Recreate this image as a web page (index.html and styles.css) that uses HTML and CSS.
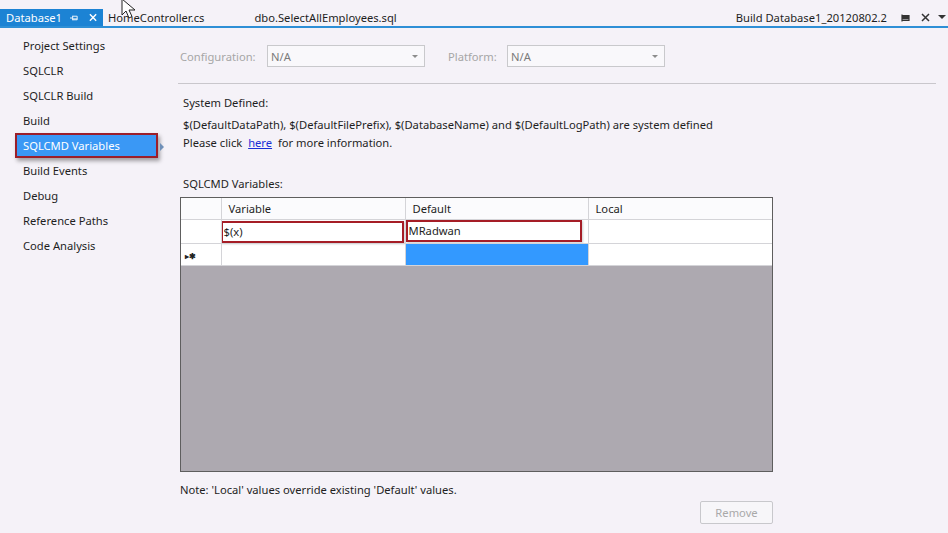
FILE: index.html
```html
<!DOCTYPE html>
<html>
<head>
<meta charset="utf-8">
<link rel="stylesheet" href="styles.css">
</head>
<body>
<div class="tabbar">
  <div class="tabs">
    <div class="tab active">
      <span class="tab-title">Database1</span>
      <svg class="pin" width="10" height="8" viewBox="0 0 10 8"><path d="M0 4h3M3 1.5v5M3 2h5v4H3M3 5h5" stroke="#fff" stroke-width="1" fill="none"/></svg>
      <svg class="x" width="9" height="9" viewBox="0 0 9 9"><path d="M1 1l7 7M8 1L1 8" stroke="#fff" stroke-width="1.6"/></svg>
    </div>
    <div class="tab">HomeController.cs</div>
    <div class="tab wide">dbo.SelectAllEmployees.sql</div>
  </div>
  <div class="tab-right">
    <span class="build">Build Database1_20120802.2</span>
    <svg class="rpin" width="10" height="8" viewBox="0 0 10 8"><path d="M1 0.5v7M1 1.5h7v5H1M1 5h7" stroke="#333" stroke-width="1.2" fill="none"/><rect x="1" y="1.5" width="7" height="3.5" fill="#333"/></svg>
    <svg class="rx" width="9" height="9" viewBox="0 0 9 9"><path d="M1 1l7 7M8 1L1 8" stroke="#333" stroke-width="1.5"/></svg>
    <svg class="rdrop" width="8" height="5" viewBox="0 0 8 5"><path d="M0 0h8L4 4z" fill="#333"/></svg>
  </div>
</div>
<svg class="cursor" width="16" height="22" viewBox="0 0 16 22"><path d="M1 1v16l4-4 3 7 3-1.5-3-6.5h6z" fill="#fff" stroke="#222" stroke-width="1"/></svg>

<div class="main">
  <nav class="nav">
    <div class="nav-item">Project Settings</div>
    <div class="nav-item">SQLCLR</div>
    <div class="nav-item">SQLCLR Build</div>
    <div class="nav-item">Build</div>
    <div class="nav-item selected">SQLCMD Variables<span class="nav-arrow"></span></div>
    <div class="nav-item">Build Events</div>
    <div class="nav-item">Debug</div>
    <div class="nav-item">Reference Paths</div>
    <div class="nav-item">Code Analysis</div>
  </nav>

  <section class="content">
    <div class="config-row">
      <span class="cfg-label">Configuration:</span>
      <div class="combo"><span>N/A</span><span class="combo-arrow"></span></div>
      <span class="cfg-label plat">Platform:</span>
      <div class="combo"><span>N/A</span><span class="combo-arrow"></span></div>
    </div>
    <div class="separator"></div>

    <div class="info">
      <p class="line first">System Defined:</p>
      <p class="line">$(DefaultDataPath), $(DefaultFilePrefix), $(DatabaseName) and $(DefaultLogPath) are system defined</p>
      <p class="line">Please click &nbsp;<a href="#">here</a>&nbsp; for more information.</p>
    </div>

    <p class="grid-label">SQLCMD Variables:</p>

    <div class="grid">
      <table>
        <colgroup>
          <col class="c-rh"><col class="c-var"><col class="c-def"><col class="c-loc">
        </colgroup>
        <tr class="hdr">
          <th></th><th>Variable</th><th>Default</th><th>Local</th>
        </tr>
        <tr class="row">
          <td class="rh"></td>
          <td class="boxed"><div class="redbox var-box">$(x)</div></td>
          <td class="boxed"><div class="redbox def-box">MRadwan</div></td>
          <td></td>
        </tr>
        <tr class="row">
          <td class="rh"><span class="newrow">&#9656;&#10033;</span></td>
          <td></td>
          <td class="sel"></td>
          <td></td>
        </tr>
      </table>
      <div class="grid-empty"></div>
    </div>

    <p class="note">Note: 'Local' values override existing 'Default' values.</p>
    <div class="btn-row">
      <button class="remove">Remove</button>
    </div>
  </section>
</div>
</body>
</html>
```

FILE: styles.css
```css
* { box-sizing: border-box; }
html, body {
  margin: 0;
  padding: 0;
  background: #f5f2f8;
  font-family: "Noto Sans", "Open Sans", sans-serif;
  font-size: 11.2px;
  color: #1e1e1e;
  width: 948px;
  height: 533px;
  overflow: hidden;
}
.tabbar {
  height: 28px;
  display: flex;
  justify-content: space-between;
  align-items: flex-end;
  border-bottom: 2px solid #2e8fd6;
}
.tabs { display: flex; align-items: flex-end; }
.tab {
  height: 17px;
  line-height: 17px;
  padding: 0 6px 0 5px;
  font-size: 11.2px;
  color: #1e1e1e;
}
.tab.wide { padding-left: 44px; }
.tab.active {
  background: #1c83d4;
  color: #fff;
  width: 103px;
  display: flex;
  align-items: center;
  padding-left: 6px;
}
.tab-title { margin-right: 8px; }
.pin { margin-right: 10px; }
.tab-right {
  display: flex;
  align-items: center;
  height: 17px;
  padding-right: 2px;
}
.build { margin-right: 14px; }
.rpin { margin-right: 10px; }
.rx { margin-right: 8px; }
.cursor {
  position: absolute;
  left: 121px;
  top: -2px;
}

.main { display: flex; }
.nav {
  width: 170px;
  padding: 5px 0 0 15px;
  display: flex;
  flex-direction: column;
}
.nav-item {
  position: relative;
  width: 143px;
  height: 25px;
  line-height: 21px;
  padding-left: 6px;
  border: 2px solid transparent;
}
.nav-item.selected {
  background: #3a98f5;
  color: #fff;
  border-color: #9c1f2a;
  box-shadow: 2px 3px 4px rgba(0,0,0,0.35);
}
.nav-arrow {
  position: absolute;
  right: -8px;
  top: 8px;
  width: 0;
  height: 0;
  border-left: 4px solid #6f8fb8;
  border-top: 4px solid transparent;
  border-bottom: 4px solid transparent;
}

.content {
  flex: 1;
  padding-left: 10px;
}
.config-row {
  display: flex;
  align-items: center;
  margin-top: 17px;
  height: 22px;
}
.cfg-label { color: #a6a6a6; width: 87px; }
.cfg-label.plat { width: 59px; margin-left: 23px; }
.combo {
  width: 158px;
  height: 22px;
  border: 1px solid #c9c9cc;
  background: #f9f8fb;
  display: flex;
  align-items: center;
  justify-content: space-between;
  padding: 0 6px 0 3px;
  color: #7a7a7a;
}
.combo-arrow {
  width: 0; height: 0;
  border-top: 3px solid #8c8c8c;
  border-left: 3px solid transparent;
  border-right: 3px solid transparent;
}
.separator {
  margin: 16px 12px 0 -2px;
  height: 1px;
  background: #c9c7cc;
}
.info { margin-top: 10px; padding-left: 3px; }
.line { margin: 0; line-height: 18px; }
.line.first { margin-bottom: 4px; }
.info a { color: #1a2fd6; text-decoration: underline; }
.grid-label { margin: 23px 0 0 3px; line-height: 18px; }
.grid {
  margin-top: 4px;
  width: 593px;
  height: 275px;
  border: 1px solid #5e5e5e;
  display: flex;
  flex-direction: column;
  background: #ada9b0;
}
table {
  border-collapse: collapse;
  table-layout: fixed;
  width: 591px;
  background: #fff;
}
.c-rh { width: 40px; }
.c-var { width: 184px; }
.c-def { width: 183px; }
.c-loc { width: 184px; }
th, td {
  border-right: 1px solid #d4d4d8;
  border-bottom: 1px solid #d4d4d8;
  padding: 0 0 0 7px;
  font-weight: normal;
  text-align: left;
  height: 22px;
  font-size: 11.2px;
}
th:last-child, td:last-child { border-right: none; }
.hdr th { height: 21px; background: #fbfbfd; }
td.boxed { padding: 0; }
.redbox {
  height: 22px;
  border: 2px solid #a51d26;
  line-height: 18px;
  box-shadow: 1px 1px 2px rgba(0,0,0,0.2);
  background: #fff;
}
.var-box { width: 183px; margin-left: -1px; margin-top: 1px; padding-left: 1px; }
.def-box { width: 176px; padding-left: 1px; }
td.sel { background: #3399ff; }
.newrow { font-size: 8px; font-weight: bold; letter-spacing: 0; color: #222; }
td.rh { padding-left: 4px; }
.grid-empty { flex: 1; }
.note { margin: 11px 0 0 0; line-height: 14px; }
.btn-row {
  width: 593px;
  display: flex;
  justify-content: flex-end;
  margin-top: 4px;
}
.remove {
  width: 73px;
  height: 23px;
  border: 1px solid #c8c8cc;
  border-radius: 2px;
  background: #f7f6f9;
  color: #a9a9a9;
  font-family: "Noto Sans", "Open Sans", sans-serif;
  font-size: 11.2px;
}
```
